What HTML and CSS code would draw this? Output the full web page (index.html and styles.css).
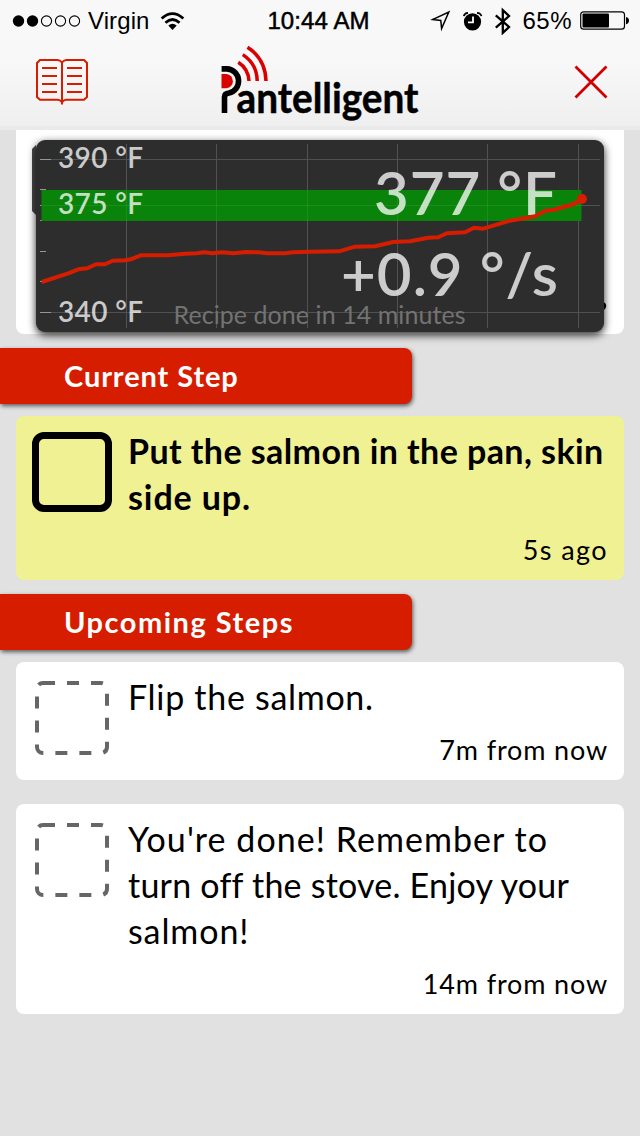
FILE: index.html
```html
<!DOCTYPE html>
<html lang="en">
<head>
<meta charset="utf-8">
<title>Pantelligent</title>
<link rel="stylesheet" href="styles.css">
</head>
<body>
<div class="app">
  <header class="header">
    <div class="status">
      <div class="status-left">
        <svg class="signal" width="70" height="14" viewBox="0 0 70 14">
          <circle cx="6.5" cy="7" r="5.7"/><circle cx="20.5" cy="7" r="5.7"/>
          <g class="hollow"><circle cx="34.5" cy="7" r="5.1"/><circle cx="48.5" cy="7" r="5.1"/><circle cx="62.5" cy="7" r="5.1"/></g>
        </svg>
        <span class="carrier">Virgin</span>
        <svg class="wifi" width="25" height="19" viewBox="0 0 26 20">
          <path class="wave" d="M1.6 6.8Q13 -3.4 24.4 6.8M5.6 11.3Q13 4.7 20.4 11.3"/>
          <path d="M8.6 14.3Q13 10.6 17.4 14.3L13 19z"/>
        </svg>
      </div>
      <span class="clock">10:44 AM</span>
      <div class="status-right">
        <svg width="22" height="22" viewBox="430 9 22 22"><path class="thin" d="M432.500 18.600L448.800 11L441.600 27.500L440.800 19.400z"/></svg>
        <svg width="22" height="22" viewBox="462 9 22 22">
          <circle cx="472.500" cy="20.800" r="8.600"/>
          <path class="ear" d="M463.800 15.200Q464.400 12 468 11.800M477 11.800Q480.800 12 481.400 15.200"/>
          <path class="hand" d="M473 15.500V21.400H468"/>
        </svg>
        <svg width="18" height="28" viewBox="493 6 18 28"><path class="blue" d="M494.800 14.400L508 26L501.800 31.800V9.200L508 15L494.800 26.600"/></svg>
        <span class="percent">65%</span>
        <svg class="battery" width="50" height="20" viewBox="580 11 50 20">
          <rect class="case" x="580.700" y="11.800" width="43.800" height="17.400" rx="3"/>
          <rect x="582.500" y="13.600" width="26.500" height="14" rx="1"/>
          <path d="M626 17q3 .6 3 3.600t-3 3.600z"/>
        </svg>
      </div>
    </div>
    <div class="nav">
      <svg class="book" width="56" height="52" viewBox="34 56 56 52">
        <path d="M62 62.500Q60 60 57.500 60H40L37 63V97L40 99.700H58Q60 99.700 62 102Q64 99.700 66 99.700H84L87 97V63L84 60H66.500Q64 60 62 62.500V104.500"/>
        <path d="M42 68H57M42 76H57M42 84H57M42 92H57M67 68H82M67 76H82M67 84H82M67 92H82"/>
      </svg>
      <svg class="logo" width="204" height="88" viewBox="218 42 204 88">
        <g class="steam"><path d="M238.300 62.300Q248.500 69 249 81"/><path d="M242.800 54.600Q257 64 257.200 81"/><path d="M247.500 47.200Q265.500 59 266 81"/></g>
        <path class="coal" d="M221.500 74H226.500A7.200 7.200 0 0 1 226.500 88.300H221.500z"/>
        <path class="pan" d="M221.600 68.900H227A12.200 12.200 0 0 1 229 93Q224.500 93.500 224.500 97V113"/>
        <text class="wordmark" x="236.500" y="112.500" textLength="182" lengthAdjust="spacingAndGlyphs">antelligent</text>
      </svg>
      <svg class="close" width="40" height="40" viewBox="571 62 40 40"><path d="M575.500 66.500L606.500 97.500M606.500 66.500L575.500 97.500"/></svg>
    </div>
  </header>

  <section class="gauge-card">
    <svg class="gauge" width="576" height="192" viewBox="32 140 576 192">
      <path class="behind" d="M36 145L32 149V211L36 215z"/>
      <circle cx="602" cy="306" r="4.200"/>
      <rect class="panel" x="36" y="140" width="568" height="192" rx="9"/>
      <path class="grid" d="M51 159.500H600M51 312.500H600M581 205.500H600M126.500 144V328M216.500 144V328M307.500 144V328M397.500 144V328M487.500 144V328M578.500 144V328"/>
      <path class="ticks" d="M40 159.500H51M40 312.500H51M40 189.500H46M40 205.500H46M40 220.500H46M40 251.500H46M40 281.500H46"/>
      <rect class="target" x="41.500" y="190" width="540" height="31"/>
      <path class="grid faint" d="M42 205.500H581M126.500 190V221M216.500 190V221M307.500 190V221M397.500 190V221M487.500 190V221"/>
      <g class="scale">
        <text x="58" y="167.500" textLength="85">390 °F</text>
        <text x="58" y="213.500" textLength="85">375 °F</text>
        <text x="58" y="321.500" textLength="85">340 °F</text>
      </g>
      <text class="note" x="173.500" y="323.500" textLength="292">Recipe done in 14 minutes</text>
      <g class="reading">
        <text x="374" y="214.500" textLength="183">377 °F</text>
        <text x="341" y="295.500" textLength="217">+0.9 °/s</text>
      </g>
      <polyline class="curve" points="41.700,282 68.300,273.300 78.300,269.300 87.300,268.300 96,264.300 105,264.300 112.700,260.700 125,260.300 130.700,259.300 140.700,255.300 168.300,255.300 185,253.700 196.700,253.300 204.300,252.300 212.300,253.300 221.700,252.300 233.300,253.300 246.700,252 258.300,252.300 266.700,253.300 285,253.300 293.300,252.300 310,251.700 339,251.300 355,246.700 375,246.300 393.300,242 410,241.300 428.300,237.700 438.300,237.300 446.700,233.300 465,232.300 474,227.700 483.300,228.700 510,220.700 535,216.300 545,211 554,209.700 573.300,204.300 582,199"/>
      <circle class="now" cx="582" cy="199" r="5"/>
    </svg>
  </section>

  <h2 class="ribbon">Current Step</h2>
  <article class="step current">
    <div class="box"></div>
    <p class="text">Put the salmon in the pan, skin<br><span class="wide">side up.</span></p>
    <p class="time ago">5s ago</p>
  </article>

  <h2 class="ribbon upcoming">Upcoming Steps</h2>
  <article class="step">
    <svg class="dashed" width="80" height="80" viewBox="0 0 80 80"><rect x="5" y="5" width="70" height="70" rx="6"/></svg>
    <p class="text flip">Flip the salmon.</p>
    <p class="time">7m from now</p>
  </article>
  <article class="step last">
    <svg class="dashed" width="80" height="80" viewBox="0 0 80 80"><rect x="5" y="5" width="70" height="70" rx="6"/></svg>
    <p class="text"><span class="wider">You're done! Remember to</span><br><span class="snug">turn off the stove. Enjoy your</span><br><span class="wide">salmon!</span></p>
    <p class="time">14m from now</p>
  </article>
</div>
</body>
</html>
```
FILE: styles.css
```css
* { box-sizing: border-box; }
body { margin: 0; font-family: Lato, "Open Sans", sans-serif; color: #000; }
h2, p { margin: 0; font-weight: 400; }
svg { display: block; flex: none; }
.app { width: 640px; height: 1136px; background: #e1e1e1; overflow: hidden; }

.header { height: 130px; background: linear-gradient(#f8f8f8 0, #f8f8f8 60px, #efefef 126px, #eaeaec 126px); }
.status { height: 40px; display: grid; grid-template-columns: 1fr auto 1fr; align-items: center; padding: 1px 11px 0 12px; font-family: "Liberation Sans", Arial, sans-serif; font-size: 24px; line-height: 40px; }
.status-left, .status-right { display: flex; align-items: center; }
.carrier { margin: 0 10px 0 6px; letter-spacing: .1px; }
.hollow circle { fill: none; stroke: #000; stroke-width: 1.1; }
.wave { fill: none; stroke: #000; stroke-width: 3; }
.clock { -webkit-text-stroke: .5px #000; letter-spacing: .1px; margin: 0 2px 0 -2px; }
.status-right { justify-content: flex-end; }
.status-right svg { margin-left: 10px; }
.thin { fill: none; stroke: #000; stroke-width: 1.5; }
.ear { fill: none; stroke: #000; stroke-width: 1.8; }
.hand { fill: none; stroke: #fff; stroke-width: 1.8; }
.blue { fill: none; stroke: #000; stroke-width: 2.3; }
.percent { margin-left: 10px; letter-spacing: .5px; }
.status-right .battery { margin-left: 8px; margin-right: -1px; }
.case { fill: none; stroke: #000; stroke-width: 1.2; }

.nav { height: 84px; margin-top: 2px; padding: 0 29px 0 34px; display: flex; justify-content: space-between; align-items: flex-start; }
.book { margin-top: 14px; fill: none; stroke: #d61d00; stroke-width: 2; }
.logo { margin-left: -22px; overflow: visible; }
.close { margin-top: 20px; fill: none; stroke: #cf0000; stroke-width: 2.8; }
.steam { fill: none; stroke: #d90000; stroke-width: 3.5; }
.coal { fill: #d90000; }
.pan { fill: none; stroke: #000; stroke-width: 5.6; stroke-linejoin: round; }
.wordmark { font-size: 42px; font-weight: 700; stroke: #000; stroke-width: .5; stroke-linejoin: round; }

.gauge-card { margin: 0 16px; height: 204px; padding: 10px 16px 0; background: #fff; border-radius: 0 0 8px 8px; }
.gauge { overflow: visible; }
.panel { fill: #2d2d2d; filter: drop-shadow(0 3px 4px rgba(0,0,0,.85)); }
.behind { fill: #4a4a4a; }
.grid { fill: none; stroke: #515151; stroke-width: 1; }
.faint { stroke: rgba(255,255,255,.08); }
.ticks { stroke: #969696; stroke-width: 1; }
.target { fill: #0a830b; }
.scale { fill: rgba(255,255,255,.76); font-size: 28px; font-weight: 600; }
.note { fill: #737373; font-size: 25px; }
.reading { fill: rgba(255,255,255,.76); font-size: 60px; font-weight: 600; }
.curve { fill: none; stroke: #d61d00; stroke-width: 4; stroke-linejoin: round; }
.now { fill: #d61d00; }

.ribbon { width: 412px; height: 56px; margin-top: 14px; padding-left: 64px; background: #d61d00; color: #fff; font-size: 29px; font-weight: 700; line-height: 56px; letter-spacing: .9px; border-radius: 0 8px 8px 0; box-shadow: 1px 2px 4px rgba(0,0,0,.6); }
.upcoming { letter-spacing: 1.5px; }
.step { margin: 12px 16px 0; padding: 12px 16px 0; height: 118px; background: #fff; border-radius: 8px; display: grid; grid-template-columns: 80px 1fr; column-gap: 16px; align-content: start; }
.current { height: 164px; background: #f0f192; }
.last { margin-top: 24px; height: 210px; }
.box { width: 80px; height: 80px; margin-top: 4px; border: 7px solid #000; border-radius: 12px; }
.step > :first-child { grid-row: 1 / span 2; }
.text { font-size: 34px; line-height: 46px; white-space: nowrap; }
.current .text { font-weight: 700; letter-spacing: .42px; }
.text .wide { letter-spacing: .9px; }
.text .wider { letter-spacing: 1.05px; }
.text .snug { letter-spacing: .22px; }
.flip { letter-spacing: .7px; }
.time { font-size: 27px; line-height: 36px; text-align: right; margin: 12px 0 0; letter-spacing: .85px; }
.ago { letter-spacing: 1.4px; }
.dashed { margin-top: 4px; fill: none; stroke: #666; stroke-width: 4; stroke-dasharray: 12 12; }
```
